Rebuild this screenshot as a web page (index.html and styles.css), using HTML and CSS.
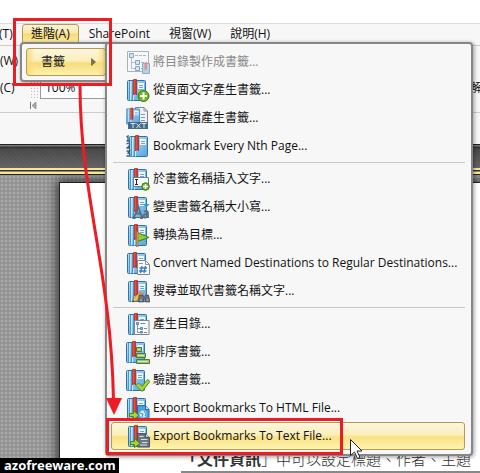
FILE: index.html
```html
<!DOCTYPE html>
<html lang="zh-Hant">
<head>
<meta charset="utf-8">
<title>書籤</title>
<link rel="stylesheet" href="styles.css">
</head>
<body>
<svg class="defs" aria-hidden="true">
  <defs>
    <linearGradient id="cover" x1="0" y1="0" x2="1" y2="1"><stop offset="0" stop-color="#b9e0f8"/><stop offset="1" stop-color="#55a5de"/></linearGradient>
    <linearGradient id="ribbon" x1="0" y1="0" x2="1" y2="0"><stop offset="0" stop-color="#f0654c"/><stop offset="1" stop-color="#c8261b"/></linearGradient>
    <symbol id="book" viewBox="0 0 24 24">
      <rect x="1.500" y="2.500" width="18" height="20" rx="1" fill="url(#cover)" stroke="#2d73ab"/>
      <path d="M3.500 3v19.500M6.500 3v19.500" stroke="#4d97cc"/>
      <path d="M4.500 3v19.500M7.500 3v19.500" stroke="#c6e8fb"/>
      <path d="M12 5h6v6h-6z" fill="#eef8ff"/>
      <path d="M13 7.500h4M13 9.500h4" stroke="#69a9d4"/>
      <path d="M7.500 1.500h3v15.500l-1.500-2-1.500 2z" fill="url(#ribbon)" stroke="#b9261c" stroke-width=".8"/>
    </symbol>
    <symbol id="arrow" viewBox="0 0 24 24"><path d="M3.500 17.500h4v-3l5.500 5-5.500 4v-3h-4z" fill="#a6d739" stroke="#4d8519"/></symbol>
    <symbol id="tree" viewBox="0 0 24 24">
      <path d="M5.500 7v11.500h5M5.500 12.500h5" fill="none" stroke="#8497a8"/>
      <path d="M3.500 3.500h4v4h-4zM9.500 10.500h4v4h-4zM9.500 16.500h4v4h-4z" fill="#b5dcf6" stroke="#41729b"/>
      <path d="M9 5.500h3m1 0h3m1 0h3M15 12.500h3m1 0h2M15 18.500h3" stroke="#7d8b97"/>
    </symbol>
  </defs>
</svg>

<div class="app">
  <div class="titlebar"></div>
  <nav class="menubar">
    <button class="menu-btn first">(T)</button>
    <button class="menu-btn active">進階(A)</button>
    <button class="menu-btn">SharePoint</button>
    <button class="menu-btn">視窗(W)</button>
    <button class="menu-btn">說明(H)</button>
  </nav>
  <div class="toolbar">
    <div class="tool-row"><span>(W)</span></div>
    <div class="tool-row">
      <span class="shortcut">(C)</span>
      <i class="grip"></i>
      <input class="zoom" aria-label="Zoom" value="100%">
      <span class="tail">解</span>
    </div>
    <svg class="first-page" viewBox="0 0 7 7"><path d="M.5 0v7" stroke="#777"/><path d="M6 0v7L2 3.500z" fill="#aaa" stroke="#777" stroke-width=".6"/></svg>
  </div>
  <div class="tabstrip"></div>
  <div class="stripes"></div>
  <main class="workspace">
    <article class="page">
      <p><b>「文件資訊</b>」中可以設定標題、作者、主題</p>
    </article>
  </main>
</div>

<div class="popup parent" role="menu">
  <button class="parent-item" role="menuitem"><span>書籤</span><svg viewBox="0 0 5 8"><path d="M.5.500 4.500 4l-4 3.500z" fill="#766f4e" stroke="#4c4939" stroke-width=".5"/></svg></button>
</div>

<div class="popup child" role="menu">
  <button class="item" role="menuitem" disabled>
    <svg viewBox="0 0 24 24"><path d="M1.500 1.500h21v20h-21z" fill="#f5f7f9" stroke="#748592"/><use href="#tree"/><path d="M16.500 13.500h7v10h-7z" fill="#83bce4" stroke="#477ca5"/><path d="M18.500 12.500h2.500v8l-1.250-1.500-1.250 1.500z" fill="#dc4b39"/></svg>將目錄製作成書籤...</button>
  <button class="item" role="menuitem">
    <svg viewBox="0 0 24 24"><use href="#book" width="24" height="24"/><circle cx="17.500" cy="18" r="5.500" fill="#6eb51f" stroke="#40800d"/><path d="M14 18h7M17.500 14.500v7" stroke="#fff" stroke-width="2"/></svg>從頁面文字產生書籤...</button>
  <button class="item" role="menuitem">
    <svg viewBox="0 0 24 24"><path d="M9.500 1.500H18l3.500 3.500v15h-12z" fill="#f2f4f5" stroke="#7b8790"/><path d="M18 1.500V5h3.500M15 8.500h4M15 11.500h4M15 14.500h4" fill="none" stroke="#89949c"/><use href="#book" width="18" height="18" x="-1" y="1"/><path d="M2 16h20v7H2z" fill="#456a88"/><path d="M4.500 17.500h5M7 17.500V22M10.500 17.500l4 4.500M14.500 17.500l-4 4.500M15.500 17.500h5M18 17.500V22" stroke="#d8e7f2"/></svg>從文字檔產生書籤...</button>
  <button class="item" role="menuitem">
    <svg viewBox="0 0 24 24"><use href="#book" x="2" width="24" height="24"/><path d="M.5 3 2 2v5M.5 7h3.500M.5 10q3-2 3 .5T.5 14h3.500M.5 17h3L2 19q3 .5 1 3H.500" fill="none" stroke="#315f84" stroke-width="1.300"/></svg>Bookmark Every Nth Page...</button>
  <hr>
  <button class="item" role="menuitem">
    <svg viewBox="0 0 24 24"><use href="#book" x="1" width="24" height="24"/><path d="M7.500 10.500h15v9h-15z" fill="#fff" stroke="#64859e"/><path d="M9 12.500h3M10.500 12.500v5M9 17.500h3" stroke="#252525"/><circle cx="19.500" cy="19.500" r="3.800" fill="#67b21c" stroke="#40800d"/><path d="M17 19.500h5M19.500 17v5" stroke="#fff" stroke-width="1.500"/></svg>於書籤名稱插入文字...</button>
  <button class="item" role="menuitem">
    <svg viewBox="0 0 24 24"><use href="#book" x="1" width="24" height="24"/><path d="M17 9h6.500l-3.250 3.500z" fill="#239bd5"/><path d="M8 22.500 12 11l4 11.500M10 18.500h5M6.500 23h3M14 23h3M18 16.500q4-1.500 4 1.500v5M22 19q-4-.5-4.500 2t4.500 1" fill="none" stroke="#5f6b74" stroke-width="1.800"/></svg>變更書籤名稱大小寫...</button>
  <button class="item" role="menuitem">
    <svg viewBox="0 0 24 24"><use href="#book" x="1" width="24" height="24"/><path d="M11.500 9.500 23 14.500l-11.500 4z" fill="#91cb33" stroke="#487b19"/><path d="M10.500 8.500h1.500V24h-1.500z" fill="#d4ae65" stroke="#876a39" stroke-width=".6"/></svg>轉換為目標...</button>
  <button class="item" role="menuitem">
    <svg viewBox="0 0 24 24"><use href="#book" width="24" height="24"/><path d="M11.500 9.500h8l4 4v10h-12z" fill="#f8fafb" stroke="#798894"/><path d="M19.500 9.500v4h4M13 12.500h4" fill="none" stroke="#8c99a3"/><path d="m16 15-1.500 7m5-7L18 22m-4.500-5h7.500m-8 3h7.500" stroke="#397eae" stroke-width="1.300"/></svg>Convert Named Destinations to Regular Destinations...</button>
  <button class="item" role="menuitem">
    <svg viewBox="0 0 24 24"><use href="#book" x="1" width="24" height="24"/><path d="m6.500 23 1-4 6.500-6 3 3-6.500 6z" fill="#f3bd3d" stroke="#896638" stroke-width=".7"/><path d="m13 14 2-1.500 2.500 2L16 17z" fill="#d98787"/><path d="m6.500 23 .5-2 1.500 1.500z" fill="#333"/><path d="M13 16h4l.5 2h1.500l.5-2h3l1.500 7h-4.500v-3h-2v3h-5z" fill="#6c7379" stroke="#41484e" stroke-width=".7"/><path d="M14 21h2M20.500 21h2" stroke="#bdc4c8"/></svg>搜尋並取代書籤名稱文字...</button>
  <hr>
  <button class="item" role="menuitem">
    <svg viewBox="0 0 24 24"><use href="#book" x="1" width="24" height="24"/><path d="M8.500 8.500h14.500v14H8.500z" fill="#fafafa" stroke="#7b8790"/><path d="M11.500 12v8.500h3M11.500 16.500h3" fill="none" stroke="#8497a8"/><path d="M10.500 10.500h2v2h-2zM14.500 15.500h2v2h-2zM14.500 19.500h2v1.500h-2z" fill="#8ac7ed" stroke="#3d719b" stroke-width=".8"/><path d="M14.500 11.500h5M18 16.500h3M18 20.500h3" stroke="#7d8b97"/></svg>產生目錄...</button>
  <button class="item" role="menuitem">
    <svg viewBox="0 0 24 24"><use href="#book" x="-1" width="24" height="24"/><path d="M10.500 7.500h5v4h-5zM10.500 13.500h9v4h-9zM10.500 19.500h13v4h-13z" fill="#9dc46f" stroke="#4d7c37"/><path d="M12 9.500h2M12 15.500h6M12 21.500h10" stroke="#d3e9bd"/></svg>排序書籤...</button>
  <button class="item" role="menuitem">
    <svg viewBox="0 0 24 24"><use href="#book" x="-1" width="24" height="24"/><path d="m10 17.500 2.500-2.500 3.500 3.500 5.500-7 2.500 2-8 10z" fill="#a6d737" stroke="#548c19"/></svg>驗證書籤...</button>
  <button class="item" role="menuitem">
    <svg viewBox="0 0 24 24"><use href="#book" width="24" height="24"/><path d="M11.500 9.500h8l3.500 4v9.500H11.500z" fill="#4aa1df" stroke="#256da8"/><path d="M19.500 9.500v4H23" fill="#cbe9fb" stroke="#256da8"/><circle cx="17" cy="18" r="3.500" fill="#d9f0fc"/><path d="m14 17 3 1-1 3m2-6 2 3-1 2" fill="none" stroke="#338dc9"/><use href="#arrow" width="24" height="24"/></svg>Export Bookmarks To HTML File...</button>
  <button class="item selected" role="menuitem">
    <svg viewBox="0 0 24 24"><use href="#book" x="1" width="24" height="24"/><path d="M11.500 9.500h8l4 4v9.500h-12z" fill="#687783" stroke="#46535e"/><path d="M19.500 9.500v4h4" fill="#cbd3d8" stroke="#46535e"/><path d="M13.500 12.500h4M15 15.500h6.500M16 18.500h5.500M14 21h7" stroke="#dce3e7"/><use href="#arrow" x="1" width="24" height="24"/></svg>Export Bookmarks To Text File...</button>
</div>

<svg class="annotation" viewBox="0 0 480 473" aria-hidden="true">
  <g fill="none" stroke="#ed1c24" stroke-width="3">
    <path d="M14.500 19.500h96v65h-96zM107.500 419.500h234v34h-234z"/>
    <path d="M80 85C80 195 111 270 113.500 400"/>
  </g>
  <path d="M106 398h16l-8 17z" fill="#ed1c24"/>
  <path d="M350.500 439.500v16l4-3.500 3 6.500 2.500-1-3-6.500h5z" fill="#fff" stroke="#222"/>
</svg>
<div class="watermark">azofreeware.com</div>
</body>
</html>
```
FILE: styles.css
```css
* { box-sizing: border-box; }

body {
  margin: 0;
  position: relative;
  height: 100vh;
  overflow: hidden;
  background: #fff;
  color: #111;
  font: 12px/20px "Open Sans", "Noto Sans CJK TC", sans-serif;
}

button, input { font: inherit; color: inherit; }

.defs { position: absolute; width: 0; height: 0; }

.app { display: flex; flex-direction: column; height: 100%; }

.titlebar { height: 24px; flex: none; border-bottom: 1px solid #dcdcdc; }

.menubar {
  display: flex;
  flex: none;
  gap: 1px;
  height: 22px;
  border-bottom: 1px solid #ccc;
  background: #f7f7f7;
}

.menu-btn {
  height: 20px;
  padding: 0 8px;
  border: 1px solid transparent;
  border-radius: 3px;
  background: none;
  line-height: 18px;
  white-space: nowrap;
}

.menu-btn.first { width: 21px; padding: 0; text-align: left; text-indent: -2px; }

.menu-btn.active {
  border-color: #b39b53;
  background: linear-gradient(#fbf3d4, #f8e8ad 45%, #f5d974 50%, #fdf0a8);
}

.toolbar {
  flex: none;
  height: 98px;
  padding-top: 1px;
  background: linear-gradient(#ccc, #ccc) 0 66px / 100% 1px no-repeat #f7f7f7;
}

.tool-row { display: flex; align-items: center; height: 27px; }
.shortcut { width: 30px; }

.grip {
  width: 8px;
  height: 20px;
  margin-right: 2px;
  background: radial-gradient(circle, #bbb 1px, transparent 1px) 0 0 / 3px 3px;
}

.zoom {
  width: 90px;
  height: 22px;
  padding: 0 4px;
  border: 1px solid #999;
  background: #fff;
}

.tail { margin-left: auto; margin-right: -2px; }
.first-page { display: block; width: 7px; height: 7px; margin: 1px 0 0 30px; }

.tabstrip {
  flex: none;
  height: 24px;
  border-top: 1px solid #222;
  background:
    repeating-linear-gradient(45deg, #ffffff08 0 1px, transparent 1px 3px),
    linear-gradient(#777 0 1px, #333 2px 3px, #484848 4px, #626262);
}

.stripes {
  flex: none;
  height: 7px;
  background: linear-gradient(#f9e596 0 2px, #333 2px 3px, #888 3px 4px, #f9e596 4px 6px, #222 6px);
}

.workspace {
  flex: 1;
  padding: 8px 0 0 60px;
  overflow: hidden;
  background:
    radial-gradient(circle, #ffffff24 1px, transparent 1px) 0 0 / 4px 4px,
    radial-gradient(circle, #0000000c 1px, transparent 1px) 2px 2px / 4px 4px,
    #989898;
}

.page {
  display: flex;
  flex-direction: column;
  justify-content: flex-end;
  height: 100%;
  background: #fff;
  box-shadow: 0 0 0 1px #222, 0 0 10px 3px #333;
}

.page p {
  margin: 0 0 0 121px;
  padding-bottom: 1px;
  border-bottom: 2px solid #888;
  color: #333;
  font: 300 15px/22px "Noto Sans CJK TC", sans-serif;
  white-space: nowrap;
}

.page b { font-size: 16px; font-weight: 700; }

.popup {
  position: absolute;
  border: 2px solid #868686;
  border-radius: 4px;
  background: #f7f7f7;
  box-shadow: 1px 1px 4px #0006;
}

.parent { top: 42px; left: 20px; width: 95px; padding: 4px; }

.parent-item {
  display: flex;
  align-items: center;
  justify-content: space-between;
  width: 80px;
  height: 28px;
  padding: 0 9px 0 14px;
  border: 1px solid #b39b53;
  border-radius: 3px;
  background: linear-gradient(90deg, #f7dc7c, transparent 8px calc(100% - 8px), #f7dc7c), linear-gradient(#fcf6df, #fbefb9 45%, #f7dc7c 55%, #fdf2ac);
}

.parent-item svg { width: 5px; height: 8px; }

.child {
  top: 42px;
  left: 105px;
  min-width: 368px;
  padding: 4px 6px 4px 4px;
}

.item {
  display: flex;
  align-items: center;
  gap: 3px;
  width: 100%;
  height: 28px;
  padding: 0 4px 0 14px;
  border: 1px solid transparent;
  border-radius: 3px;
  background: none;
  text-align: left;
  white-space: nowrap;
}

.item svg { flex: none; width: 24px; height: 24px; }
.item:disabled { color: #888; }
.item:disabled svg { opacity: .6; }

.item.selected {
  border-color: #b39b53;
  background: linear-gradient(#fcf6df, #fbefb9 45%, #f9e287 55%, #fdf4ae);
}

.child hr {
  height: 1px;
  margin: 2px 0 2px 2px;
  border: 0;
  background: #c8c8c8;
}

.annotation { position: absolute; top: 0; left: 0; width: 480px; pointer-events: none; }

.watermark {
  position: absolute;
  bottom: 0;
  left: 0;
  padding: 0 3px 0 4px;
  background: #000;
  color: #fff;
  font: 700 13px/15px "Noto Sans", sans-serif;
}
```
